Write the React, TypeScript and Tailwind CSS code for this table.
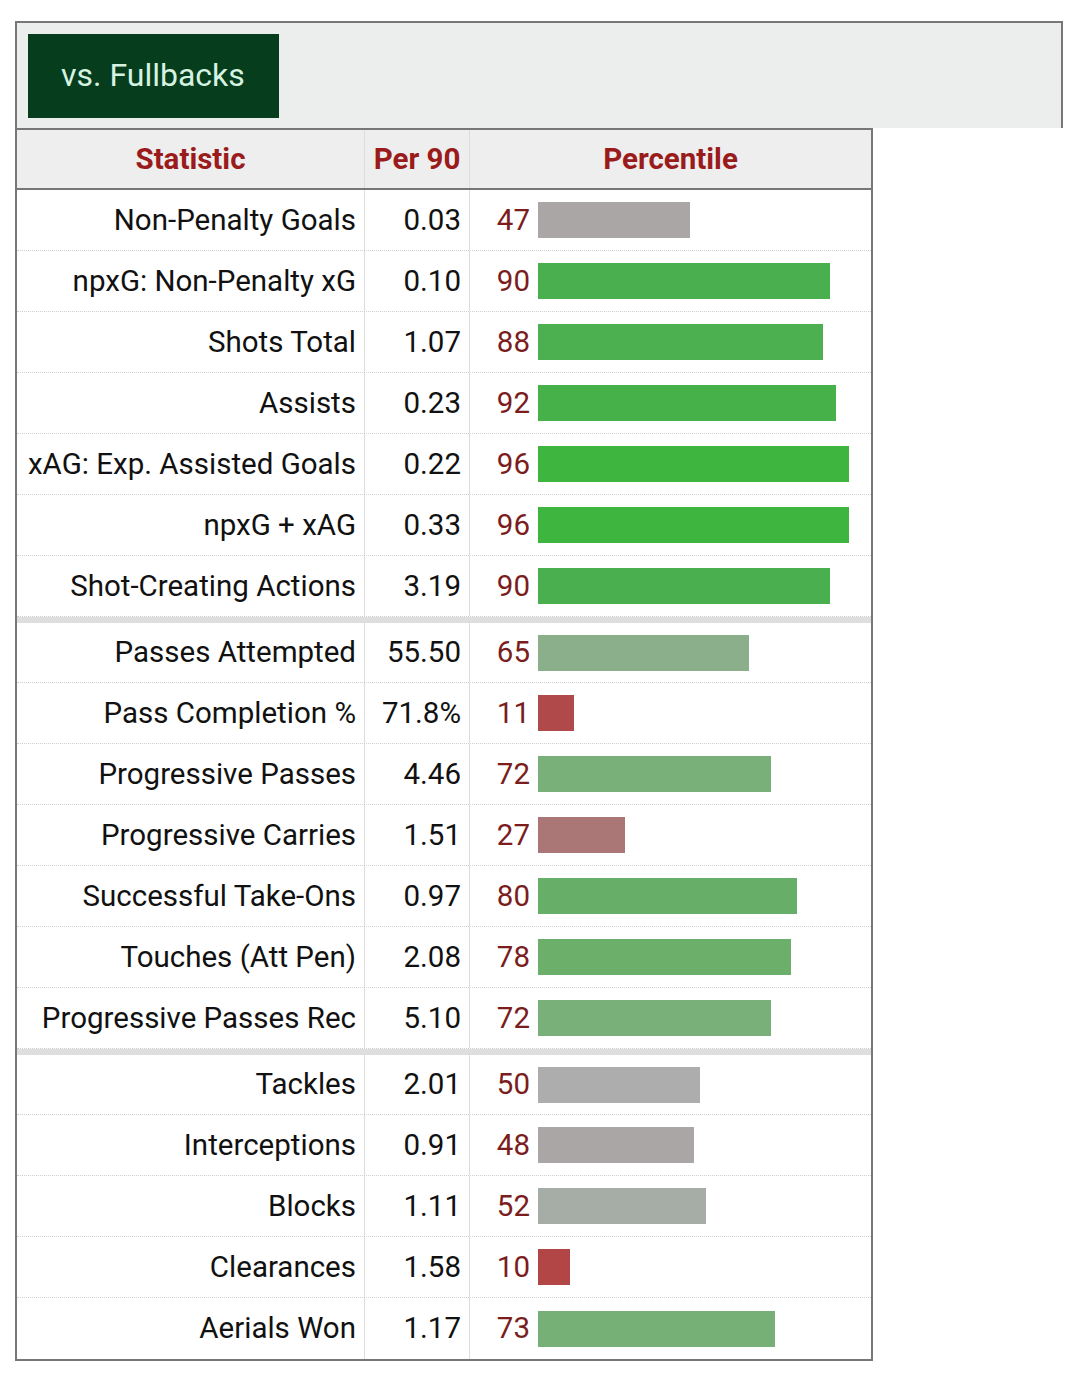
import React from "react";

type Row = { label: string; per90: string; pct: number; color: string };

const groups: Row[][] = [
  [
    { label: "Non-Penalty Goals", per90: "0.03", pct: 47, color: "#aba6a6" },
    { label: "npxG: Non-Penalty xG", per90: "0.10", pct: 90, color: "#4aaf4e" },
    { label: "Shots Total", per90: "1.07", pct: 88, color: "#4caf50" },
    { label: "Assists", per90: "0.23", pct: 92, color: "#45b148" },
    { label: "xAG: Exp. Assisted Goals", per90: "0.22", pct: 96, color: "#3db53f" },
    { label: "npxG + xAG", per90: "0.33", pct: 96, color: "#3db53f" },
    { label: "Shot-Creating Actions", per90: "3.19", pct: 90, color: "#4aaf4e" },
  ],
  [
    { label: "Passes Attempted", per90: "55.50", pct: 65, color: "#8aaf8a" },
    { label: "Pass Completion %", per90: "71.8%", pct: 11, color: "#b04a4a" },
    { label: "Progressive Passes", per90: "4.46", pct: 72, color: "#79b079" },
    { label: "Progressive Carries", per90: "1.51", pct: 27, color: "#ab7676" },
    { label: "Successful Take-Ons", per90: "0.97", pct: 80, color: "#67af68" },
    { label: "Touches (Att Pen)", per90: "2.08", pct: 78, color: "#6baf6b" },
    { label: "Progressive Passes Rec", per90: "5.10", pct: 72, color: "#79b079" },
  ],
  [
    { label: "Tackles", per90: "2.01", pct: 50, color: "#adadad" },
    { label: "Interceptions", per90: "0.91", pct: 48, color: "#aba6a6" },
    { label: "Blocks", per90: "1.11", pct: 52, color: "#a6aca6" },
    { label: "Clearances", per90: "1.58", pct: 10, color: "#b24545" },
    { label: "Aerials Won", per90: "1.17", pct: 73, color: "#77b077" },
  ],
];

const StatRow = ({ row, last, first }: { row: Row; last: boolean; first: boolean }) => (
  <div
    className={`flex ${first ? "h-[66px] border-t-[6px] border-solid border-t-[#dedede]" : "h-[61px]"} ${
      last ? "" : "border-b border-b-[#cfcfcf]"
    }`}
    style={last ? undefined : { borderBottomStyle: "dotted" }}
  >
    <div className="flex w-[348px] items-center justify-end border-r border-[#dddddd] pr-[8px] text-[29.5px] text-[#111]">
      {row.label}
    </div>
    <div className="flex w-[105px] items-center justify-end border-r border-[#dddddd] pr-[8px] text-[29.5px] text-[#111]">
      {row.per90}
    </div>
    <div className="flex flex-1 items-center">
      <div className="w-[60px] text-right text-[29.5px] text-[#7b1d1d]">{row.pct}</div>
      <div className="ml-[8px] h-[36px]" style={{ width: Math.round(row.pct * 3.24), backgroundColor: row.color }} />
    </div>
  </div>
);

export default function App() {
  return (
    <div className="min-h-[1395px] bg-white pl-[15px] pt-[21px]" style={{ fontFamily: "Roboto, 'Noto Sans', sans-serif" }}>
      <div className="h-[107px] w-[1048px] border-2 border-b-0 border-[#777777] bg-[#eceeed] p-[11px]">
        <div className="flex h-[84px] w-[251px] items-center bg-[#053d1d] pb-[2px] pl-[33px] text-[32px] text-[#d6f2e1]">
          vs. Fullbacks
        </div>
      </div>
      <div className="w-[858px] border-2 border-[#777777]">
        <div className="flex h-[60px] border-b-2 border-[#777777] bg-[#eeeeee] text-[29.5px] font-bold text-[#9a1b1b]">
          <div className="flex w-[348px] items-center justify-center border-r border-[#dddddd]">Statistic</div>
          <div className="flex w-[105px] items-center justify-center border-r border-[#dddddd]">Per 90</div>
          <div className="flex flex-1 items-center justify-center">Percentile</div>
        </div>
        {groups.map((g, gi) => (
          <div key={gi}>
            {g.map((r, ri) => (
              <StatRow
                key={r.label}
                row={r}
                first={gi > 0 && ri === 0}
                last={gi === groups.length - 1 && ri === g.length - 1}
              />
            ))}
          </div>
        ))}
      </div>
    </div>
  );
}
